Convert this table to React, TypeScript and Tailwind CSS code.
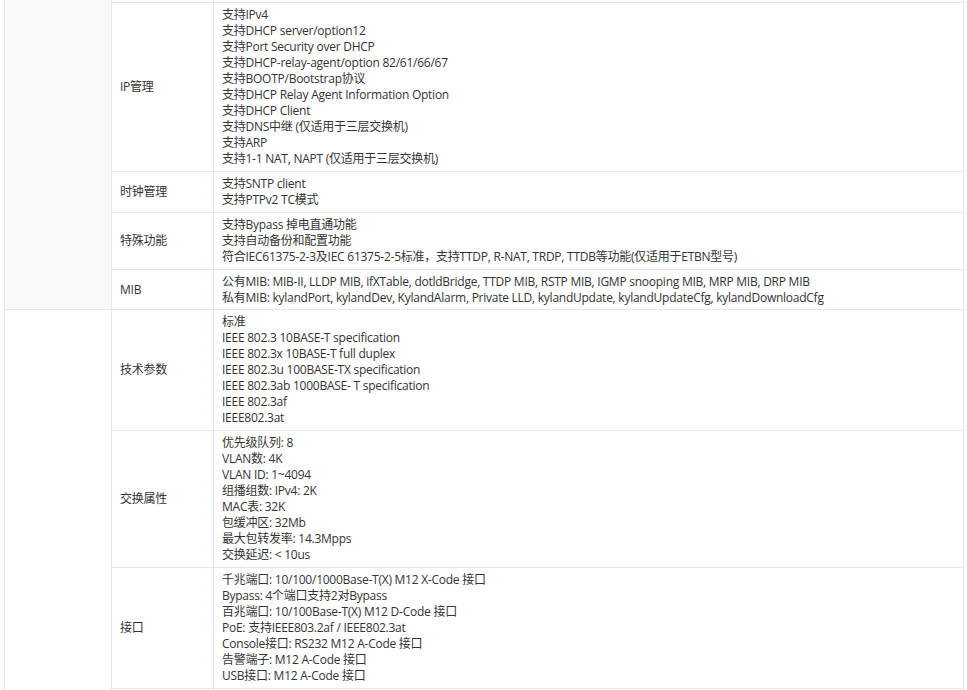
const groups: { rows: { label: string; lines: string[]; tight?: boolean }[] }[] = [
  {
    rows: [
      {
        label: 'IP管理',
        lines: [
          '支持IPv4',
          '支持DHCP server/option12',
          '支持Port Security over DHCP',
          '支持DHCP-relay-agent/option 82/61/66/67',
          '支持BOOTP/Bootstrap协议',
          '支持DHCP Relay Agent Information Option',
          '支持DHCP Client',
          '支持DNS中继 (仅适用于三层交换机)',
          '支持ARP',
          '支持1-1 NAT, NAPT (仅适用于三层交换机)',
        ],
      },
      { label: '时钟管理', lines: ['支持SNTP client', '支持PTPv2 TC模式'] },
      {
        label: '特殊功能',
        lines: [
          '支持Bypass 掉电直通功能',
          '支持自动备份和配置功能',
          '符合IEC61375-2-3及IEC 61375-2-5标准，支持TTDP, R-NAT, TRDP, TTDB等功能(仅适用于ETBN型号)',
        ],
      },
      {
        label: 'MIB',
        tight: true,
        lines: [
          '公有MIB: MIB-II, LLDP MIB, ifXTable, dotldBridge, TTDP MIB, RSTP MIB, IGMP snooping MIB, MRP MIB, DRP MIB',
          '私有MIB: kylandPort, kylandDev, KylandAlarm, Private LLD, kylandUpdate, kylandUpdateCfg, kylandDownloadCfg',
        ],
      },
    ],
  },
  {
    rows: [
      {
        label: '技术参数',
        lines: [
          '标准',
          'IEEE 802.3 10BASE-T specification',
          'IEEE 802.3x 10BASE-T full duplex',
          'IEEE 802.3u 100BASE-TX specification',
          'IEEE 802.3ab 1000BASE- T specification',
          'IEEE 802.3af',
          'IEEE802.3at',
        ],
      },
      {
        label: '交换属性',
        lines: [
          '优先级队列: 8',
          'VLAN数: 4K',
          'VLAN ID: 1~4094',
          '组播组数: IPv4: 2K',
          'MAC表: 32K',
          '包缓冲区: 32Mb',
          '最大包转发率: 14.3Mpps',
          '交换延迟: < 10us',
        ],
      },
      {
        label: '接口',
        lines: [
          '千兆端口: 10/100/1000Base-T(X) M12 X-Code 接口',
          'Bypass: 4个端口支持2对Bypass',
          '百兆端口: 10/100Base-T(X) M12 D-Code 接口',
          'PoE: 支持IEEE803.2af / IEEE802.3at',
          'Console接口: RS232 M12 A-Code 接口',
          '告警端子: M12 A-Code 接口',
          'USB接口: M12 A-Code 接口',
        ],
      },
    ],
  },
];

const cell = 'border border-[#e8e8e8] px-[8px] pt-[4px] align-middle';

export default function App() {
  return (
    <div
      className="bg-white w-[967px] h-[690px] overflow-hidden pl-[4px] text-[12px] leading-[16px] tracking-[-0.25px] text-[#333]"
      style={{ fontFamily: '"Open Sans", "Noto Sans CJK SC", sans-serif' }}
    >
      <table className="w-[960px] table-fixed border-collapse">
        <colgroup>
          <col className="w-[107px]" />
          <col className="w-[102px]" />
          <col />
        </colgroup>
        <tbody>
          {/* 上一行的尾部，被截断 */}
          <tr className="h-[2px]">
            <td rowSpan={5} className="border-l border-r border-b border-[#e8e8e8] bg-[#f9f9f9] p-0" />
            <td className="border-l border-r border-[#e8e8e8] p-0" />
            <td className="border-l border-r border-[#e8e8e8] p-0" />
          </tr>
          {groups[0].rows.map((r) => (
            <tr key={r.label}>
              <td className={`${cell} ${r.tight ? 'pb-[3px]' : 'pb-[4px]'}`}>{r.label}</td>
              <td className={`${cell} ${r.tight ? 'pb-[3px]' : 'pb-[4px]'}`}>
                {r.lines.map((l) => (
                  <div key={l}>{l}</div>
                ))}
              </td>
            </tr>
          ))}
          {groups[1].rows.map((r, i) => (
            <tr key={r.label}>
              {i === 0 && <td rowSpan={4} className="border border-[#e8e8e8] bg-white p-0" />}
              <td className={`${cell} pb-[4px]`}>{r.label}</td>
              <td className={`${cell} pb-[4px]`}>
                {r.lines.map((l) => (
                  <div key={l}>{l}</div>
                ))}
              </td>
            </tr>
          ))}
          {/* 下一行，在视口之外 */}
          <tr className="h-[40px]">
            <td className={cell} />
            <td className={cell} />
          </tr>
        </tbody>
      </table>
    </div>
  );
}
